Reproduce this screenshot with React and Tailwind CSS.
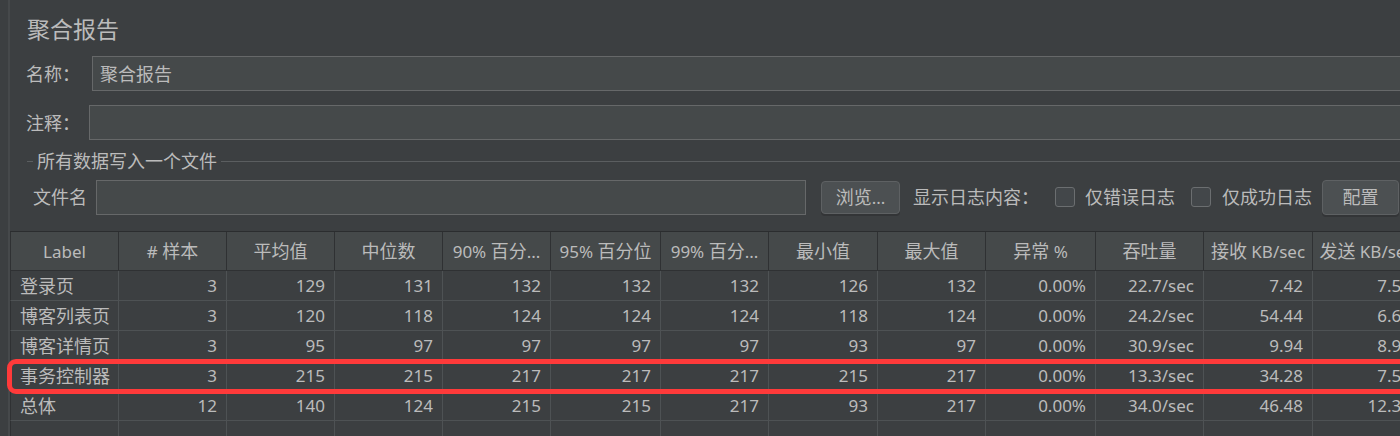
import React from "react";

const COLS = [108, 108, 108, 108, 108, 110, 108, 109, 108, 110, 108, 109, 108];
const HEADERS = ["Label", "# 样本", "平均值", "中位数", "90% 百分...", "95% 百分位", "99% 百分...", "最小值", "最大值", "异常 %", "吞吐量", "接收 KB/sec", "发送 KB/sec"];
const ROWS = [
  ["登录页", "3", "129", "131", "132", "132", "132", "126", "132", "0.00%", "22.7/sec", "7.42", "7.54"],
  ["博客列表页", "3", "120", "118", "124", "124", "124", "118", "124", "0.00%", "24.2/sec", "54.44", "6.63"],
  ["博客详情页", "3", "95", "97", "97", "97", "97", "93", "97", "0.00%", "30.9/sec", "9.94", "8.97"],
  ["事务控制器", "3", "215", "215", "217", "217", "217", "215", "217", "0.00%", "13.3/sec", "34.28", "7.51"],
  ["总体", "12", "140", "124", "215", "215", "217", "93", "217", "0.00%", "34.0/sec", "46.48", "12.34"],
  ["", "", "", "", "", "", "", "", "", "", "", "", ""],
];

const CJK = /[\u3000-\u303f\u4e00-\u9fff\uff00-\uffef]/;

function T({ children }) {
  const parts = String(children).split(/([\u3000-\u303f\u4e00-\u9fff\uff00-\uffef]+)/);
  return (
    <span className="whitespace-pre">
      {parts.map((p, i) =>
        CJK.test(p) ? (
          <span key={i} className="text-[18px]">{p}</span>
        ) : (
          <span key={i} className="text-[17px]">{p}</span>
        )
      )}
    </span>
  );
}

function Checkbox() {
  return <div className="w-[20px] h-[20px] rounded-[3px] border border-[#6b6e70] bg-[#43474a] shrink-0" />;
}

function Button({ children, className }) {
  return (
    <div className={"flex items-center justify-center rounded-[4px] border border-[#5e6163] bg-[#4c5052] shadow-[0_2px_0_#333537] shrink-0 " + className}>
      <span className="text-[#bbbbbb]"><T>{children}</T></span>
    </div>
  );
}

export default function App() {
  return (
    <div className="w-[1400px] h-[436px] overflow-hidden bg-[#3c3f41] flex text-[#bbbbbb] font-['Noto_Sans','Noto_Sans_CJK_SC',sans-serif] leading-none">
      <div className="w-[8px] shrink-0" />
      <div className="w-[2px] shrink-0 bg-[#46494b]" />
      <div className="flex flex-col min-w-0 flex-1 relative">
        {/* title */}
        <div className="h-[56px] shrink-0 flex items-center pl-[17px] pt-[3px]">
          <span className="text-[23px] text-[#bbbbbb]">聚合报告</span>
        </div>
        {/* name row */}
        <div className="h-[35px] shrink-0 flex items-center">
          <div className="w-[82px] pl-[16px] shrink-0"><T>名称：</T></div>
          <div className="h-full w-[1400px] shrink-0 bg-[#45494a] border border-[#666869] flex items-center pl-[7px]">
            <T>聚合报告</T>
          </div>
        </div>
        {/* comment row */}
        <div className="h-[35px] shrink-0 mt-[14px] flex items-center">
          <div className="w-[79px] pl-[16px] shrink-0"><T>注释：</T></div>
          <div className="h-full w-[1400px] shrink-0 bg-[#45494a] border border-[#666869]" />
        </div>
        {/* legend */}
        <div className="h-[39px] shrink-0 flex items-center pt-[3px]">
          <div className="ml-[17px] w-[6px] h-px bg-[#5b5e60]" />
          <span className="mx-[4px]"><T>所有数据写入一个文件</T></span>
          <div className="flex-1 h-px bg-[#5b5e60]" />
        </div>
        {/* file row */}
        <div className="h-[36px] shrink-0 flex items-center">
          <div className="w-[86px] pl-[23px] shrink-0"><T>文件名</T></div>
          <div className="h-[35px] w-[710px] shrink-0 bg-[#45494a] border border-[#666869]" />
          <Button className="ml-[15px] w-[79px] h-[33px]">浏览...</Button>
          <div className="ml-[13px] w-[142px] shrink-0"><T>显示日志内容：</T></div>
          <Checkbox />
          <div className="ml-[10px] w-[106px] shrink-0"><T>仅错误日志</T></div>
          <Checkbox />
          <div className="ml-[11px] w-[100px] shrink-0"><T>仅成功日志</T></div>
          <Button className="w-[77px] h-[35px]">配置</Button>
        </div>
        {/* table */}
        <div className="mt-[16px] shrink-0 border-t border-[#2b2d2f] w-[1420px]">
          <div className="flex h-[39px] bg-[#45494a] border-b border-[#2f3133] border-l border-l-[#2f3133]">
            {HEADERS.map((h, i) => (
              <div key={i} style={{ width: COLS[i] }} className="shrink-0 h-full flex items-center justify-center border-r border-[#2f3133] whitespace-nowrap overflow-hidden">
                <T>{h}</T>
              </div>
            ))}
          </div>
          {ROWS.map((r, ri) => (
            <div key={ri} className="flex h-[30px] border-b border-[#4e5254] border-l border-l-[#2f3133]">
              {r.map((c, ci) => (
                <div
                  key={ci}
                  style={{ width: COLS[ci] }}
                  className={
                    "shrink-0 h-full flex items-center border-r border-[#4e5254] whitespace-nowrap overflow-hidden " +
                    (ci === 0 ? "justify-start pl-[9px]" : "justify-end pr-[9px]")
                  }
                >
                  <T>{c}</T>
                </div>
              ))}
            </div>
          ))}
        </div>
        {/* red annotation */}
        <div className="absolute left-[-3px] top-[359px] w-[1440px] h-[35px] border-[5px] border-[#ff3a3a] rounded-[9px] pointer-events-none" />
      </div>
    </div>
  );
}
